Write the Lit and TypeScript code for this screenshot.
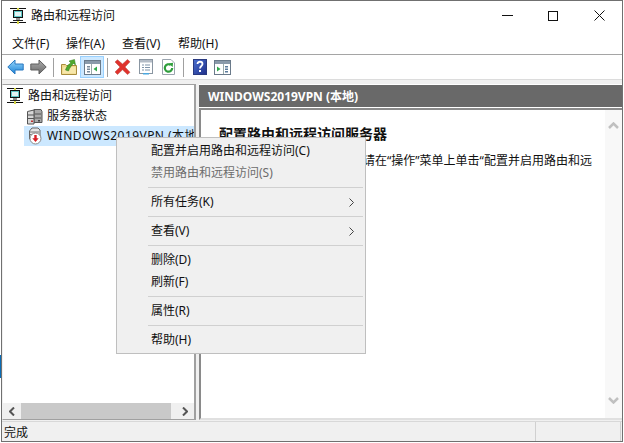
import { LitElement, html, css, svg } from "lit";
import { customElement } from "lit/decorators.js";

const backIcon = svg`<svg width="17" height="16" viewBox="0 0 17 16"><defs><linearGradient id="bk" x1="0" y1="0" x2="0" y2="1"><stop offset="0" stop-color="#9ad8fc"/><stop offset="1" stop-color="#1a82d6"/></linearGradient></defs><path d="M8 1 .8 8 8 15v-4h8.200V5H8z" fill="url(#bk)" stroke="#2a78c0"/></svg>`;
const fwdIcon = svg`<svg width="17" height="16" viewBox="0 0 17 16"><defs><linearGradient id="fw" x1="0" y1="0" x2="0" y2="1"><stop offset="0" stop-color="#acacac"/><stop offset="1" stop-color="#6a6a6a"/></linearGradient></defs><path d="M9 1l7.200 7L9 15v-4H.8V5H9z" fill="url(#fw)" stroke="#5f5f5f"/></svg>`;
const upIcon = svg`<svg width="16" height="16" viewBox="0 0 16 16"><path d="M.5 5.500h4l1 1h10v9H.5z" fill="#f0d98c" stroke="#a88c3c"/><path d="M1.500 14.500 2.500 8h12l.5 6.500z" fill="#f7e7aa"/><path d="M4.500 11c1-3.500 3-6 5.500-7L8 2l5.500-1.500L14.500 6 12.500 4.500C10.500 6.500 8.500 9 7.500 12z" fill="#4fa82e" stroke="#2f7a1a" stroke-width=".5"/></svg>`;
const treeIcon = svg`<svg width="17" height="15" viewBox="0 0 17 15"><rect x=".5" y=".5" width="16" height="14" fill="#fff" stroke="#6a7a8a"/><rect x="1" y="1" width="15" height="3" fill="#8a9aaa"/><rect x="3" y="6" width="3" height="1.500" fill="#7a8a9a"/><rect x="3" y="8.500" width="3" height="1.500" fill="#7a8a9a"/><rect x="3" y="11" width="3" height="1.500" fill="#7a8a9a"/><path d="M7.500 4v10" stroke="#9aa"/><path d="M13 6.500v5L9.500 9z" fill="#2fa84a"/></svg>`;
const xIcon = svg`<svg width="17" height="16" viewBox="0 0 17 16"><path d="M1 3 3.500.8 8.500 5 13.500.5 16 2.800 11 8l5 5.300L13.500 15.500 8.500 10.800 3.500 15.500 1 13 6 8z" fill="#e0322c" stroke="#c0554f" stroke-width=".6"/></svg>`;
const propIcon = svg`<svg width="16" height="16" viewBox="0 0 16 16"><rect x="1.500" y=".5" width="13" height="14" fill="#fff" stroke="#8a96a2"/><rect x="2" y="1" width="12" height="2.500" fill="#b4bcc6"/><path d="M4 6h2M7 6h5M4 8.500h2M7 8.500h5M4 11h2M7 11h5" stroke="#7f93a8"/><rect x="5" y="14" width="6" height="1.500" fill="#4aa8e0"/></svg>`;
const refreshIcon = svg`<svg width="15" height="16" viewBox="0 0 15 16"><path d="M1.500.5H10l3.500 3.500v11.500h-12z" fill="#fff" stroke="#9aa4ae"/><path d="M11.200 9a3.700 3.700 0 1 1-1.500-3" fill="none" stroke="#2f9e3c" stroke-width="2.200"/><path d="M7.500 4.500l4.500-.8-.3 4.300z" fill="#2f9e3c"/></svg>`;
const helpIcon = svg`<svg width="14" height="16" viewBox="0 0 14 16"><defs><linearGradient id="hl" x1="0" y1="0" x2="1" y2="1"><stop offset="0" stop-color="#4a6fd0"/><stop offset="1" stop-color="#20308a"/></linearGradient></defs><rect x=".5" y=".5" width="13" height="15" fill="url(#hl)" stroke="#2a3a80"/><path d="M4.500 5c0-3 5-3 5 0 0 2-2.500 2-2.500 4.500" fill="none" stroke="#fff" stroke-width="1.800"/><rect x="6" y="11" width="2" height="2" fill="#fff"/></svg>`;
const actionIcon = svg`<svg width="17" height="15" viewBox="0 0 17 15"><rect x=".5" y=".5" width="16" height="14" fill="#fff" stroke="#6a7a8a"/><rect x="1" y="1" width="15" height="3" fill="#8a9aaa"/><path d="M3 6.500v5L6.500 9z" fill="#2fa84a"/><path d="M9.500 4v10" stroke="#9aa"/><rect x="11" y="6" width="3" height="1.500" fill="#5a7a9a"/><rect x="11" y="8.500" width="3" height="1.500" fill="#5a7a9a"/><rect x="11" y="11" width="3" height="1.500" fill="#5a7a9a"/></svg>`;
const rootIcon = svg`<svg width="16" height="16" viewBox="0 0 16 16"><path d="M0 .5h16M0 14.500h16" stroke="#111"/><rect x="7" y="0" width="2" height="2" fill="#d8d84a"/><rect x="7" y="13" width="2" height="3" fill="#d8d84a"/><rect x="3.500" y="2.500" width="9" height="7" fill="#5fc8c8" stroke="#111"/><rect x="5" y="4" width="6" height="4" fill="#e4f4f4"/><path d="M6 11h4M3 12.500h10" stroke="#222" stroke-width="1.200"/></svg>`;
const serverIcon = svg`<svg width="17" height="17" viewBox="0 0 17 17"><path d="M8 1.500h7l1 2v11h-8z" fill="#a9a9a9" stroke="#555"/><path d="M1.500 3.500 8 2v14H1.500z" fill="#d6d6d6" stroke="#555"/><path d="M2 7h6M2 10.500h6M9 6h6M9 10h6" stroke="#555"/><rect x="5" y="12.500" width="2" height="1.500" fill="#c03030"/><rect x="12" y="12" width="2" height="1.500" fill="#444"/></svg>`;
const serverDownIcon = svg`<svg width="16" height="18" viewBox="0 0 16 18"><path d="M2.500 4 5 1h6l2 2v9H2.500z" fill="#e4e4e4" stroke="#666"/><path d="M3 5h9M3 7.500h4" stroke="#777"/><circle cx="8.500" cy="11.500" r="5.500" fill="#fff" stroke="#888"/><path d="M7.300 8h2.400v3.200h2L8.500 15l-3.200-3.800h2z" fill="#d81f26"/></svg>`;

@customElement("app-root")
export class AppRoot extends LitElement {
  static styles = css`
    :host {
      display: block;
      width: 624px;
      height: 443px;
      overflow: hidden;
      background: linear-gradient(to bottom, #fff 355px, #0a6cb5 355px, #0a6cb5 378px, #fff 378px) left / 1px 100% no-repeat, #fff;
      font-family: "Noto Sans", "Noto Sans CJK SC", sans-serif;
      font-size: 12px;
      color: #111;
    }
    svg { flex: none; }
    .window {
      position: relative;
      box-sizing: border-box;
      margin-left: 1px;
      width: 622px;
      height: 442px;
      border: 1px solid #707070;
      background: #f0f0f0;
      display: flex;
      flex-direction: column;
    }
    .title {
      height: 29px;
      background: #fff;
      display: flex;
      align-items: center;
      padding-left: 8px;
      flex: none;
    }
    .title .text { margin-left: 5px; line-height: 16px; }
    .caption { margin-left: auto; display: flex; }
    .caption div { width: 46px; height: 29px; display: flex; align-items: center; justify-content: center; }
    .menubar {
      height: 25px;
      box-sizing: border-box;
      padding: 3px 0 0 10px;
      background: #fff;
      border-bottom: 1px solid #a5a5a5;
      display: flex;
      align-items: center;
      flex: none;
    }
    .menubar span { width: 56px; line-height: 16px; }
    .menubar span:first-child { width: 54px; }
    .toolbar {
      height: 24px;
      background: #fff;
      border-bottom: 1px solid #dcdcdc;
      display: flex;
      align-items: center;
      padding-left: 2px;
      flex: none;
    }
    .tb { display: flex; align-items: center; justify-content: center; height: 22px; box-sizing: border-box; }
    .tb.w23 { width: 23px; }
    .tb.active { background: #cce8ff; border: 1px solid #99d1ff; width: 24px; }
    .sep { width: 1px; height: 19px; background: #a0a0a0; margin: 0 3px; }
    .sep.wide { margin-right: 4px; }
    .panes {
      flex: 1;
      display: flex;
      min-height: 0;
      padding: 4px 0 1px 0;
      gap: 3px;
    }
    .left {
      width: 194px;
      box-sizing: border-box;
      background: #fff;
      border: 1px solid #a0a0a0;
      border-left-color: #f0f0f0;
      border-right-width: 2px;
      display: flex;
      flex-direction: column;
      min-height: 0;
    }
    .tree { flex: 1; padding-top: 1px; min-height: 0; overflow: hidden; }
    .row { height: 20px; display: flex; align-items: center; white-space: nowrap; overflow: hidden; }
    .row .label { line-height: 16px; }
    .row.r0 { padding-left: 4px; gap: 5px; }
    .row.r1 { padding-left: 23px; gap: 4px; }
    .row.r2 { margin-left: 21px; padding-left: 3px; gap: 4px; background: #cce8ff; }
    .row.r2 .label { letter-spacing: .45px; }
    .hscroll { height: 16px; background: #f0f0f0; display: flex; align-items: center; flex: none; }
    .hscroll .arrow { width: 18px; display: flex; justify-content: center; }
    .hscroll .thumb { width: 150px; height: 16px; background: #c9c9c9; }
    .hscroll .fill { flex: 1; }
    .right {
      flex: 1;
      min-width: 0;
      display: flex;
      flex-direction: column;
      background: #fff;
    }
    .hdr {
      height: 22px;
      margin-top: 1px;
      background: #696969;
      color: #fff;
      font-weight: 700;
      font-size: 12px;
      display: flex;
      align-items: center;
      padding-left: 9px;
      flex: none;
    }
    .bodywrap {
      flex: 1;
      min-height: 0;
      margin-top: 1px;
      border-top: 2px solid #8a8a8a;
      border-left: 2px solid #8a8a8a;
      border-bottom: 2px solid #e0e0e0;
      display: flex;
    }
    .body { flex: 1; padding: 14px 10px 0 18px; min-width: 0; overflow: hidden; }
    .body h1 { margin: 0; font-size: 14px; font-weight: 700; line-height: 20px; }
    .body p { margin: 7px 0 0; line-height: 20px; width: 378px; }
    .vscroll { width: 17px; background: #f8f8f8; display: flex; flex-direction: column; align-items: center; justify-content: space-between; padding: 12px 0 14px; box-sizing: border-box; flex: none; }
    .status {
      height: 20px;
      box-sizing: border-box;
      flex: none;
      display: flex;
      align-items: center;
      padding-left: 2px;
      border-top: 1px solid #d8d8d8;
    }
    .status .main { flex: 1; line-height: 16px; padding-top: 2px; }
    .status .cell { height: 19px; box-sizing: border-box; border-left: 1px solid #d0d0d0; }
    .status .c1 { width: 85px; }
    .status .c2 { width: 2px; }
    .ctx {
      position: absolute;
      left: 114px;
      top: 136px;
      width: 250px;
      box-sizing: border-box;
      background: #f0f0f0;
      border: 1px solid #bfbfbf;
      padding: 2px;
    }
    .it { height: 22px; display: flex; align-items: center; padding-left: 32px; line-height: 16px; }
    .it.dis { color: #6d6d6d; }
    .it .chev { margin-left: auto; margin-right: 9px; display: flex; }
    .div { height: 7px; display: flex; align-items: center; padding-left: 29px; }
    .div i { display: block; height: 1px; flex: 1; background: #d0d0d0; }
  `;

  render() {
    const chev = html`<span class="chev"><svg width="5" height="9" viewBox="0 0 5 9"><path d="M.5.5 4.500 4.500.5 8.500" fill="none" stroke="#444"/></svg></span>`;
    const div = html`<div class="div"><i></i></div>`;
    return html`
      <div class="window">
        <div class="title">
          ${rootIcon}
          <span class="text">路由和远程访问</span>
          <div class="caption">
            <div><svg width="11" height="1"><rect width="11" height="1" fill="#111"/></svg></div>
            <div><svg width="10" height="10"><rect x=".5" y=".5" width="9" height="9" fill="none" stroke="#111"/></svg></div>
            <div><svg width="11" height="11"><path d="M.5.5l10 10M10.500.5l-10 10" stroke="#111"/></svg></div>
          </div>
        </div>
        <div class="menubar">
          <span>文件(F)</span><span>操作(A)</span><span>查看(V)</span><span>帮助(H)</span>
        </div>
        <div class="toolbar">
          <div class="tb w23">${backIcon}</div>
          <div class="tb w23">${fwdIcon}</div>
          <div class="sep"></div>
          <div class="tb w23">${upIcon}</div>
          <div class="tb active">${treeIcon}</div>
          <div class="sep"></div>
          <div class="tb w23">${xIcon}</div>
          <div class="tb w23">${propIcon}</div>
          <div class="tb w23">${refreshIcon}</div>
          <div class="sep wide"></div>
          <div class="tb w23">${helpIcon}</div>
          <div class="tb w23">${actionIcon}</div>
        </div>
        <div class="panes">
          <div class="left">
            <div class="tree">
              <div class="row r0">${rootIcon}<span class="label">路由和远程访问</span></div>
              <div class="row r1">${serverIcon}<span class="label">服务器状态</span></div>
              <div class="row r2">${serverDownIcon}<span class="label">WINDOWS2019VPN (本地)</span></div>
            </div>
            <div class="hscroll">
              <div class="arrow"><svg width="6" height="9" viewBox="0 0 6 9"><path d="M5 .5 1 4.500l4 4" fill="none" stroke="#555" stroke-width="2"/></svg></div>
              <div class="thumb"></div>
              <div class="fill"></div>
              <div class="arrow"><svg width="6" height="9" viewBox="0 0 6 9"><path d="M1 .5l4 4-4 4" fill="none" stroke="#555" stroke-width="2"/></svg></div>
            </div>
          </div>
          <div class="right">
            <div class="hdr">WINDOWS2019VPN (本地)</div>
            <div class="bodywrap">
              <div class="body">
                <h1>配置路由和远程访问服务器</h1>
                <p>若要配置路由和远程访问，请在“操作”菜单上单击“配置并启用路由和远程访问”。</p>
              </div>
              <div class="vscroll">
                <svg width="11" height="7" viewBox="0 0 11 7"><path d="M1 6l4.500-4.500L10 6" fill="none" stroke="#c0c0c0" stroke-width="2.500"/></svg>
                <svg width="11" height="7" viewBox="0 0 11 7"><path d="M1 1l4.500 4.500L10 1" fill="none" stroke="#c0c0c0" stroke-width="2.500"/></svg>
              </div>
            </div>
          </div>
        </div>
        <div class="status">
          <span class="main">完成</span>
          <div class="cell c1"></div>
          <div class="cell c2"></div>
        </div>
        <div class="ctx">
          <div class="it">配置并启用路由和远程访问(C)</div>
          <div class="it dis">禁用路由和远程访问(S)</div>
          ${div}
          <div class="it">所有任务(K)${chev}</div>
          ${div}
          <div class="it">查看(V)${chev}</div>
          ${div}
          <div class="it">删除(D)</div>
          <div class="it">刷新(F)</div>
          ${div}
          <div class="it">属性(R)</div>
          ${div}
          <div class="it">帮助(H)</div>
        </div>
      </div>
    `;
  }
}
